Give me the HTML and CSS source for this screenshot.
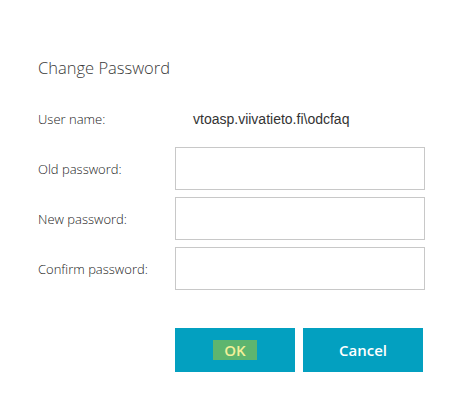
FILE: index.html
```html
<!DOCTYPE html>
<html>
<head>
<meta charset="utf-8">
<link rel="stylesheet" href="styles.css">
</head>
<body>
<div class="dialog">
  <h1 class="title">Change Password</h1>
  <div class="form">
    <div class="label user-label">User name:</div>
    <div class="user-value">vtoasp.viivatieto.fi\odcfaq</div>
    <div class="label">Old password:</div>
    <input class="field" type="password">
    <div class="label">New password:</div>
    <input class="field" type="password">
    <div class="label">Confirm password:</div>
    <input class="field" type="password">
  </div>
  <div class="buttons">
    <button class="btn"><span class="ok-hl">OK</span></button>
    <button class="btn">Cancel</button>
  </div>
</div>
</body>
</html>
```
FILE: styles.css
```css
html, body {
  margin: 0;
  padding: 0;
  background: #ffffff;
}
.dialog {
  padding: 56px 0 0 38px;
  font-family: "Open Sans", "Noto Sans", sans-serif;
}
.title {
  margin: 0;
  font-size: 16.5px;
  font-weight: 300;
  color: #3a3a3a;
  line-height: 24px;
}
.form {
  margin-top: 28px;
  display: grid;
  grid-template-columns: 137px 250px;
  grid-template-rows: 32px;
  grid-auto-rows: 43px;
  row-gap: 7px;
  align-items: center;
}
.form .user-label, .form .user-value {
  height: 22px;
  line-height: 22px;
  align-self: start;
}
.label {
  font-size: 13px;
  font-weight: 300;
  color: #222;
}
.user-value {
  font-family: "Liberation Sans", Arial, sans-serif;
  font-size: 14px;
  color: #333;
  padding-left: 18px;
}
.field {
  box-sizing: border-box;
  width: 250px;
  height: 43px;
  border: 1px solid #c8c8c8;
  margin: 0;
  padding: 0 8px;
  background: #fff;
  outline: none;
}
.buttons {
  margin-top: 38px;
  margin-left: 137px;
  display: flex;
  gap: 8px;
}
.btn {
  width: 120px;
  height: 44px;
  border: none;
  background: #03a0c0;
  color: #fff;
  font-family: "Open Sans", "Noto Sans", sans-serif;
  font-size: 15px;
  font-weight: 600;
  padding: 0;
}
.ok-hl {
  display: inline-block;
  background: #5db56f;
  color: #f3f09a;
  padding: 0 11px;
  line-height: 20px;
}
```
